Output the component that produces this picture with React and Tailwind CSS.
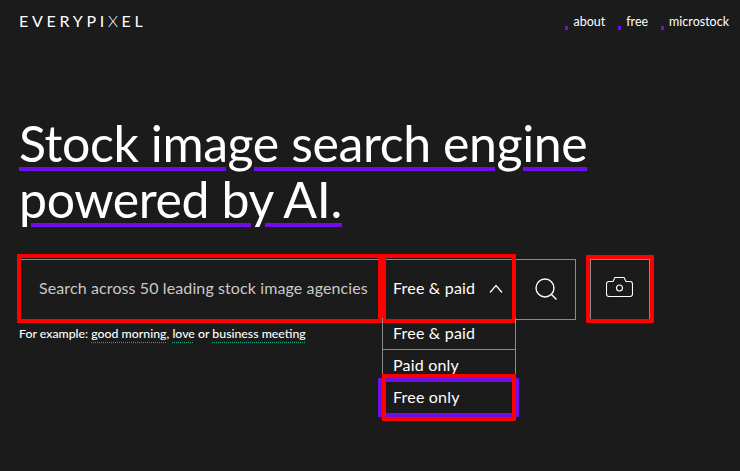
const font = { fontFamily: "Lato, sans-serif" };

function Mark({ className }) {
  return <div className={`absolute pointer-events-none border-4 border-[#ff0000] ${className}`} />;
}

function NavLink({ children }) {
  return (
    <a className="flex items-end gap-[5px] text-[12.5px] leading-[18px] text-white">
      <span className="w-[3px] h-[4px] mb-[1px] bg-[#6f0fe8]" />
      {children}
    </a>
  );
}

export default function App() {
  return (
    <div className="w-[740px] h-[471px] overflow-hidden bg-[#1b1b1b] text-white" style={font}>
      <header className="flex items-center justify-between h-[42px] pl-[19px] pr-[11px]">
        <div className="text-[16px] leading-[16px] tracking-[3.7px]">
          EVERYPI<span className="font-light">X</span>EL
        </div>
        <nav className="flex gap-[13px] mt-[2px]">
          <NavLink>about</NavLink>
          <NavLink>free</NavLink>
          <NavLink>microstock</NavLink>
        </nav>
      </header>

      <h1 className="mt-[73px] ml-[19px] text-[50px] leading-[56px] tracking-[-0.4px] font-normal underline decoration-[#6f0fe8] decoration-[3.5px] underline-offset-[5px]">
        Stock image search engine
        <br />
        powered by AI.
      </h1>

      <div className="flex mt-[32px] ml-[20px] items-start">
        <div className="relative flex w-[556px] h-[61px] border border-l-0 border-[#8c8c8c]">
          <div className="relative flex items-center w-[362px] pl-[19px] pb-[3px] text-[16px] tracking-[0.11px] text-[#c9c9c9]">
            Search across 50 leading stock image agencies
            <Mark className="left-[-3px] top-[-6px] w-[365px] h-[69px]" />
          </div>
          <div className="relative w-[134px]">
            <div className="flex items-center justify-between h-full pl-[11px] pr-[13px] pb-[3px] text-[16px] tracking-[0.2px]">
              Free &amp; paid
              <svg width="14" height="9" viewBox="0 0 14 9" fill="none" stroke="currentColor" strokeWidth="1.2">
                <path d="M1 8.5 7 1.5l6 7" />
              </svg>
            </div>
            <Mark className="left-0 top-[-6px] w-[134px] h-[69px]" />
            <ul className="absolute left-0 top-[58px] w-[134px] border-x border-[#8c8c8c] text-[16px] tracking-[0.2px]">
              <li className="h-[32px] pl-[10px] pt-[3px] border-b border-[#8c8c8c]">Free &amp; paid</li>
              <li className="h-[32px] pl-[10px] pt-[3px]">Paid only</li>
              <li className="relative h-[32px] pl-[10px] pt-[3px]">
                Free only
                <div className="absolute pointer-events-none left-[-5px] top-[-4px] w-[141px] h-[39px] border-4 border-[#6f0fe8]" />
                <Mark className="left-[-1px] top-[-8px] w-[134px] h-[47px]" />
              </li>
            </ul>
          </div>
          <div className="flex items-center justify-center flex-1 pb-[2px]">
            <svg width="22" height="22" viewBox="0 0 22 22" fill="none" stroke="currentColor" strokeWidth="1.4">
              <circle cx="10" cy="10" r="9" />
              <path d="m16.5 16.5 5 5" />
            </svg>
          </div>
        </div>
        <div className="relative flex items-center justify-center w-[60px] h-[61px] ml-[14px] pb-[6px] pr-[2px] border border-[#8c8c8c]">
          <svg width="27" height="20" viewBox="0 0 27 20" fill="none" stroke="currentColor" strokeWidth="1.1">
            <path d="M3 4.5h4l2-4h9l2 4h4a2.5 2.5 0 0 1 2.5 2.5v10a2.5 2.5 0 0 1-2.5 2.5H3a2.5 2.5 0 0 1-2.5-2.5V7A2.5 2.5 0 0 1 3 4.5z" />
            <circle cx="13.5" cy="11" r="3" />
          </svg>
          <Mark className="left-[-5px] top-[-5px] w-[68px] h-[68px]" />
        </div>
      </div>

      <p className="mt-[6px] ml-[19px] text-[12.3px] leading-[16px] font-medium">
        For example:{" "}
        <a className="underline decoration-dotted decoration-[#1aa37a] underline-offset-[4px]">good morning</a>,{" "}
        <a className="underline decoration-dotted decoration-[#1aa37a] underline-offset-[4px]">love</a> or{" "}
        <a className="underline decoration-dotted decoration-[#1aa37a] underline-offset-[4px]">business meeting</a>
      </p>
    </div>
  );
}
